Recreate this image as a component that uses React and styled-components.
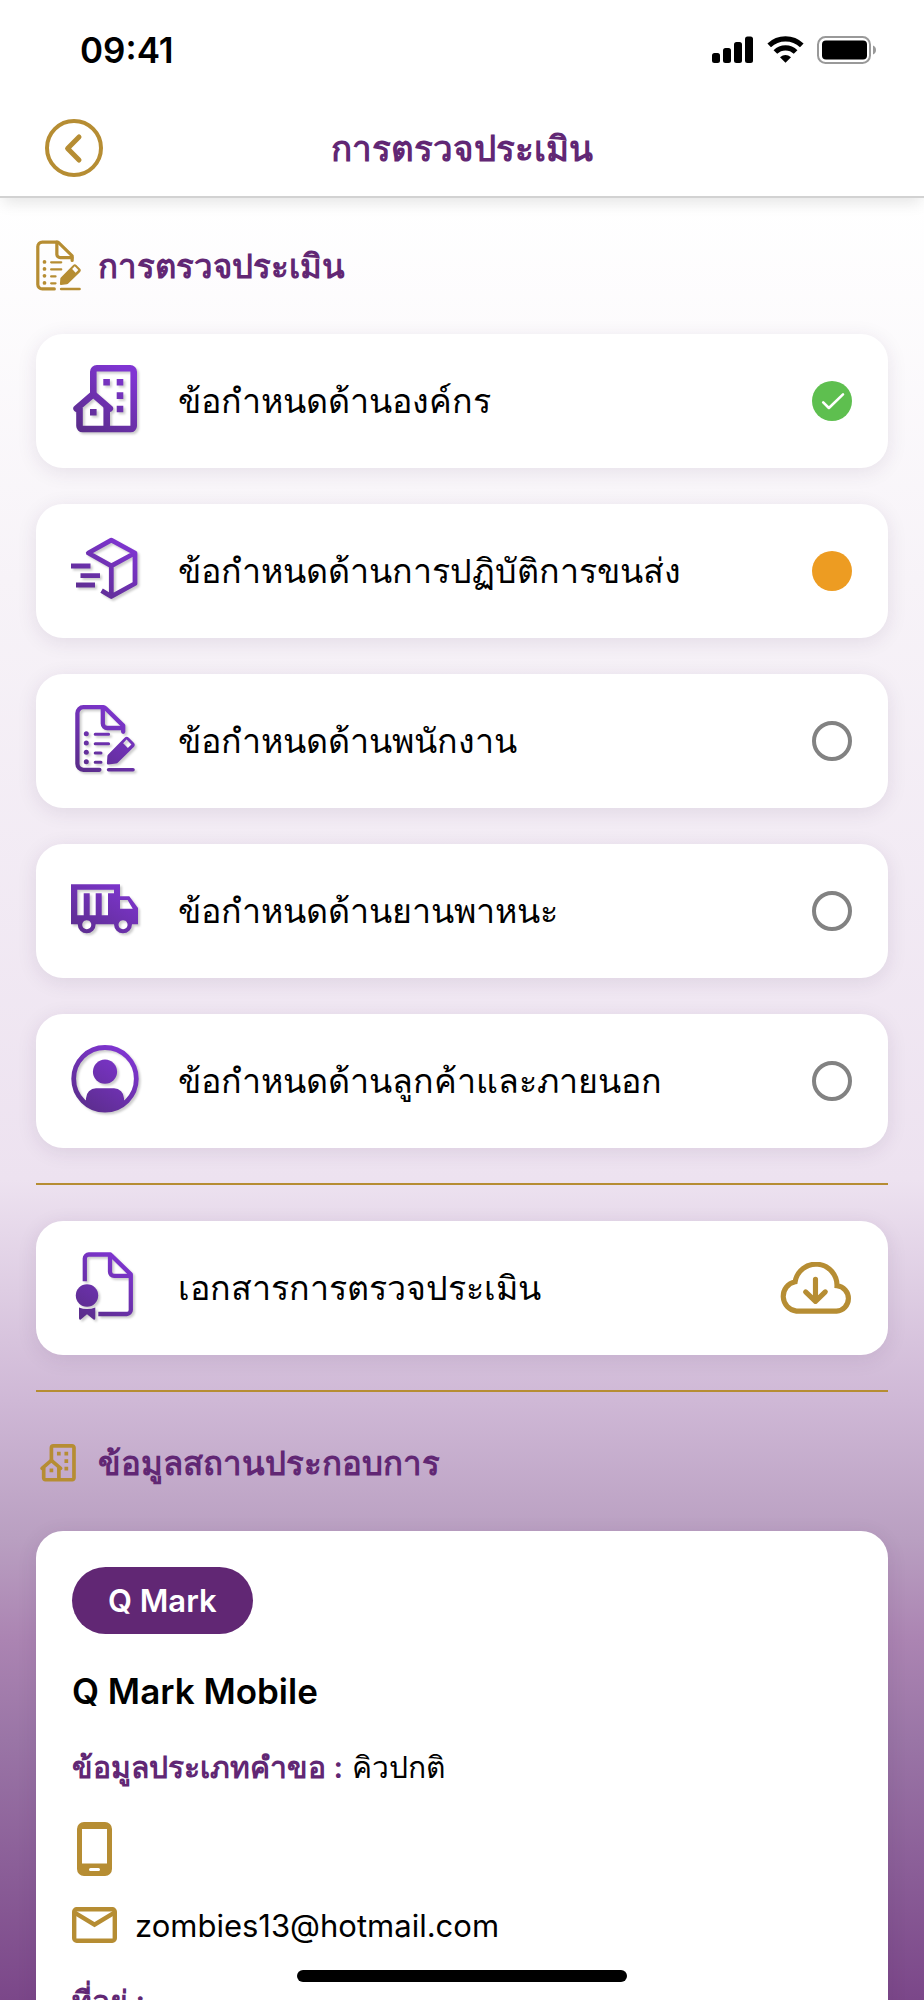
import styled, { createGlobalStyle, css } from "styled-components";

const gold = "#b68d33";
const purple = "#612774";

const requirements = [
    { icon: "building", label: "ข้อกำหนดด้านองค์กร", status: "done" },
    { icon: "delivery", label: "ข้อกำหนดด้านการปฏิบัติการขนส่ง", status: "progress" },
    { icon: "checklist", label: "ข้อกำหนดด้านพนักงาน", status: "empty" },
    { icon: "truck", label: "ข้อกำหนดด้านยานพาหนะ", status: "empty" },
    { icon: "person", label: "ข้อกำหนดด้านลูกค้าและภายนอก", status: "empty" },
];

const shapes = {
    building: (
        <>
            <g fill="none" stroke="currentColor" strokeWidth="6.6">
                <path d="M22.3 30V6.8a3.5 3.5 0 0 1 3.5-3.5h33.4a3.5 3.5 0 0 1 3.5 3.5V61a3 3 0 0 1-3 3H11.5a3 3 0 0 1-3-3V43" />
                <path d="M35.7 64V42" />
                <path d="M5.6 43.5L22.2 29.2L38.8 43.5" strokeLinecap="round" />
            </g>
            <path fill="currentColor" d="M32.3 14h6.6v6.6h-6.6zM45.7 14h6.6v6.6h-6.6zM45.7 27.3h6.6v6.6h-6.6zM45.7 40.7h6.6v6.6h-6.6zM19 44h6.6v6.6H19z" />
        </>
    ),
    delivery: (
        <g fill="none" stroke="currentColor" strokeWidth="4.8">
            <path strokeLinejoin="round" d="M40.3 5.2L17.3 18L40.3 30.8L64 18L40.3 5.2ZM64 18V48.5L40.3 61.5L30.6 55.6M40.3 30.8V61.5" />
            <path d="M0 31H19.5M9.5 40.7H29M5 50H24" />
        </g>
    ),
    checklist: (
        <>
            <g fill="none" stroke="currentColor" strokeWidth="4.3" strokeLinecap="round" strokeLinejoin="round">
                <path d="M52.2 26.8V20.6L34.5 3.2a3.5 3.5 0 0 0-2.4-1H12.4a6 6 0 0 0-6 6V58.8a6 6 0 0 0 6 6H28.4" />
                <path d="M31.8 2.4V18.6a4.4 4.4 0 0 0 4.4 4.4H52" />
                <path strokeWidth="3.6" d="M37.6 64.8H62" />
                <path strokeWidth="3" d="M24.2 29.3H37.6M24.2 38.7H37.6M24.2 48H30M24.2 57.3H30" />
            </g>
            <g fill="currentColor">
                <circle cx="15.3" cy="28.7" r="2.5" />
                <circle cx="15.3" cy="38" r="2.5" />
                <circle cx="15.3" cy="47.3" r="2.5" />
                <circle cx="15.3" cy="56.7" r="2.5" />
                <path fillRule="evenodd" d="M37.2 49.4L53.6 32.8Q55.7 30.8 57.8 32.8L62.8 37.8Q64.7 39.9 62.8 42L47 57.6Q46.3 58.4 45 58.6L37.4 59.5Q35.8 59.6 35.9 58L36.4 51Q36.5 50.1 37.2 49.4ZM55.6 34.6L52.2 38.2L56.8 43L60.4 39.4Z" />
            </g>
        </>
    ),
    truck: (
        <path
            fill="currentColor"
            fillRule="evenodd"
            d="M0 9.3H49V21.3H58.3L67 33V49.3H61A9 9 0 1 1 43 49.3H24.7A9 9 0 1 1 6.7 49.3H0ZM6.3 14.7V40.3H12.7V18.3H18.7V40.3H24.7V18.3H30.7V40.3H37V18.3H43V14.7ZM49 25V33.7H61.8L56.6 25ZM15.7 45.2a4.5 4.5 0 1 0 .1 0ZM52 45.2a4.5 4.5 0 1 0 .1 0Z"
        />
    ),
    person: (
        <>
            <circle cx="34" cy="33.8" r="31.3" fill="none" stroke="currentColor" strokeWidth="4.8" />
            <circle cx="34" cy="26.7" r="12.1" fill="currentColor" />
            <path fill="currentColor" d="M15 57V53.3a10 10 0 0 1 10-10H43a10 10 0 0 1 10 10V57Q45 66 34 66T15 57Z" />
        </>
    ),
    certificate: (
        <>
            <g fill="none" stroke="currentColor" strokeWidth="4.3" strokeLinejoin="round">
                <path d="M13.8 29.3V6.5a4 4 0 0 1 4-4H39.4L59.8 22.4V58a4 4 0 0 1-4 4H27.3" />
                <path d="M39 2.6V19.8a4 4 0 0 0 4 4H59.6" />
            </g>
            <circle cx="16" cy="43.5" r="11.2" fill="currentColor" />
            <path fill="currentColor" d="M8 55.6Q16 58.6 24.3 55.6V66.2Q24.2 68.2 22.6 67.4L16 62.2L9.8 67.4Q8.1 68.2 8 66.2Z" />
        </>
    ),
};

// the purple icons are one shape used as a mask over the gradient
const GradientIcon = ({ name }) => (
    <RowIcon viewBox="0 0 68 72" aria-hidden="true">
        <defs>
            <linearGradient id={`fill-${name}`} gradientUnits="userSpaceOnUse" x1="54" y1="4" x2="14" y2="66">
                <stop offset="0" stopColor="#8035d3" />
                <stop offset="1" stopColor="#5b2d8c" />
            </linearGradient>
            <mask id={`shape-${name}`} maskUnits="userSpaceOnUse" x="0" y="0" width="68" height="72">
                <g color="#fff">{shapes[name]}</g>
            </mask>
        </defs>
        <rect width="68" height="72" fill={`url(#fill-${name})`} mask={`url(#shape-${name})`} />
    </RowIcon>
);

const Status = ({ type }) => (
    <StatusMark viewBox="0 0 40 40" role="img" aria-label={type}>
        {type === "done" && (
            <>
                <circle cx="20" cy="20" r="20" fill="#5ebf4f" />
                <path d="M11.2 21.3L16.9 27L31 13.4" fill="none" stroke="#fff" strokeWidth="2.6" strokeLinecap="round" strokeLinejoin="round" />
            </>
        )}
        {type === "progress" && <circle cx="20" cy="20" r="20" fill="#ed9c22" />}
        {type === "empty" && <circle cx="20" cy="20" r="18" fill="none" stroke="#828282" strokeWidth="4" />}
    </StatusMark>
);

export default function App() {
    return (
        <Screen>
            <GlobalStyle />
            <Header>
                <StatusBar>
                    <Time>09:41</Time>
                    <Signals viewBox="0 0 165 28" aria-hidden="true">
                        <rect x="0" y="17" width="8" height="10" rx="2.5" />
                        <rect x="11" y="12" width="8" height="15" rx="2.5" />
                        <rect x="22" y="6" width="8" height="21" rx="2.5" />
                        <rect x="33" y="0.5" width="8" height="26.5" rx="2.5" />
                        <g fill="none" stroke="#000" strokeWidth="5.2">
                            <path d="M57.2 9.4A23.6 23.6 0 0 1 89.8 9.4" />
                            <path d="M63.4 16A14.4 14.4 0 0 1 83.6 16" />
                        </g>
                        <path d="M73.5 26.8L68 21.2Q73.5 16.6 79 21.2Z" />
                        <rect x="106" y="1" width="52" height="26" rx="7.5" fill="none" stroke="#999" strokeWidth="2" />
                        <rect x="110" y="4.5" width="45" height="19" rx="4" />
                        <path d="M161 9.5Q164 10.8 164 14T161 18.5Z" fill="#999" />
                    </Signals>
                </StatusBar>
                <NavBar>
                    <BackButton type="button" aria-label="กลับ">
                        <svg viewBox="0 0 58 58" width="58" height="58" fill="none" stroke="currentColor">
                            <circle cx="29" cy="29" r="27" strokeWidth="4" />
                            <path d="M34 18L22.6 29.4L34 41" strokeWidth="5" strokeLinecap="round" strokeLinejoin="round" />
                        </svg>
                    </BackButton>
                    <PageTitle>การตรวจประเมิน</PageTitle>
                </NavBar>
            </Header>

            <Content>
                <SectionHeading>
                    <svg viewBox="4 0 60 67" width="45" height="51" aria-hidden="true">{shapes.checklist}</svg>
                    <h2>การตรวจประเมิน</h2>
                </SectionHeading>

                <List>
                    {requirements.map((r) => (
                        <Row key={r.icon} type="button">
                            <GradientIcon name={r.icon} />
                            <RowLabel>{r.label}</RowLabel>
                            <Status type={r.status} />
                        </Row>
                    ))}
                </List>

                <Divider />

                <Row type="button">
                    <GradientIcon name="certificate" />
                    <RowLabel>เอกสารการตรวจประเมิน</RowLabel>
                    <Cloud viewBox="1 0 70 50" aria-hidden="true">
                        <path d="M17 47.5A14.5 14.5 0 0 1 15.7 18.9A20.5 20.5 0 0 1 56.4 22.8A12.4 12.4 0 0 1 56 47.5Z" />
                        <path strokeLinecap="round" strokeLinejoin="round" d="M35.5 16.5V38M25.9 28.8L35.5 38L45 28.8" />
                    </Cloud>
                </Row>

                <Divider />

                <SectionHeading>
                    <svg viewBox="3 0 64 68" width="45" height="38" aria-hidden="true">{shapes.building}</svg>
                    <h2>ข้อมูลสถานประกอบการ</h2>
                </SectionHeading>

                <InfoCard>
                    <Badge>Q Mark</Badge>
                    <CompanyName>Q Mark Mobile</CompanyName>
                    <InfoText>
                        <strong>ข้อมูลประเภทคำขอ :</strong> คิวปกติ
                    </InfoText>
                    <Contact $tall>
                        <svg viewBox="0 0 45 54" width="45" height="54" aria-hidden="true">
                            <path fill="currentColor" fillRule="evenodd" d="M12 0H33a7 7 0 0 1 7 7V47a7 7 0 0 1-7 7H12a7 7 0 0 1-7-7V7a7 7 0 0 1 7-7ZM10 7V41.5H35V7ZM18.5 46a1.3 1.3 0 0 0 0 3H26.5a1.3 1.3 0 0 0 0-3Z" />
                        </svg>
                    </Contact>
                    <Contact>
                        <svg viewBox="0 0 45 36" width="45" height="36" fill="none" stroke="currentColor" strokeWidth="4.4" aria-hidden="true">
                            <rect x="2.2" y="2.2" width="40.6" height="31.6" rx="2.5" />
                            <path d="M3 5.8L22.5 17.6L42 5.8" />
                        </svg>
                        <a href="mailto:zombies13@hotmail.com">zombies13@hotmail.com</a>
                    </Contact>
                    <InfoText>
                        <strong>ที่อยู่ :</strong>
                    </InfoText>
                </InfoCard>
            </Content>
            <HomeIndicator />
        </Screen>
    );
}

const GlobalStyle = createGlobalStyle`
*{
    box-sizing: border-box;
}
body{
    margin: 0;
    font-family: Inter, "Noto Sans", sans-serif;
    color: #000;
}
h1, h2, h3, p{
    margin: 0;
}
button{
    font: inherit;
    color: inherit;
    border: 0;
    padding: 0;
    cursor: pointer;
}
`;

const Screen = styled.div`
display: flex;
flex-direction: column;
height: 100vh;
overflow: hidden;
background: linear-gradient(180deg, #fff 10%, #f7f3f8 29%, #ede2f0 59%, #cfb8d6 70%, #b99fc1 77%, #ab84b2 82%, #9a75a6 87%, #7b4789 100%);
`;

const Header = styled.header`
position: relative;
flex: none;
background: #fff;
border-bottom: 2px solid #d2d2d2;
box-shadow: 0 8px 14px -3px rgba(0, 0, 0, 0.1);
`;

const StatusBar = styled.div`
display: flex;
align-items: center;
justify-content: space-between;
height: 100px;
padding: 0 47px 0 80px;
`;

const Time = styled.span`
font-size: 35px;
font-weight: 600;
line-height: 40px;
`;

const Signals = styled.svg`
width: 165px;
height: 28px;
`;

const NavBar = styled.div`
display: grid;
grid-template-columns: 58px 1fr 58px;
align-items: center;
height: 96px;
padding: 0 45px;
`;

const BackButton = styled.button`
display: flex;
background: none;
color: ${gold};
`;

const headingText = css`
font-weight: 600;
color: ${purple};
`;

const PageTitle = styled.h1`
${headingText}
font-size: 35px;
line-height: 48px;
text-align: center;
`;

const Content = styled.main`
flex: 1;
min-height: 0;
padding: 33px 36px 0;
overflow-y: auto;
scrollbar-width: none;
`;

const SectionHeading = styled.div`
display: flex;
align-items: center;
gap: 17px;
height: 60px;
padding-top: 9px;
margin-bottom: 43px;
color: ${gold};

h2{
    ${headingText}
    font-size: 33px;
    line-height: 48px;
}
`;

const List = styled.div`
display: flex;
flex-direction: column;
gap: 36px;
`;

const card = css`
background: #fff;
border-radius: 27px;
box-shadow: 0 4px 20px rgba(60, 30, 80, 0.1);
`;

const Row = styled.button`
${card}
display: flex;
align-items: center;
gap: 39px;
width: 100%;
height: 134px;
padding: 0 36px 0 35px;
text-align: left;
`;

const RowIcon = styled.svg`
flex: none;
width: 68px;
height: 72px;
overflow: visible;
filter: drop-shadow(2px 2px 1px rgba(0, 0, 0, 0.2));
`;

const RowLabel = styled.span`
flex: 1;
font-size: 34px;
line-height: 48px;
`;

const StatusMark = styled.svg`
flex: none;
width: 40px;
height: 40px;
`;

const Cloud = styled.svg`
flex: none;
width: 72px;
height: 52px;
fill: none;
stroke: ${gold};
stroke-width: 5px;
`;

const Divider = styled.hr`
height: 2px;
margin: 35px 0 36px;
border: 0;
background: ${gold};
`;

const InfoCard = styled.section`
${card}
display: flex;
flex-direction: column;
align-items: flex-start;
padding: 36px;
`;

const Badge = styled.span`
padding: 0 36px;
border-radius: 34px;
background: ${purple};
color: #fff;
font-size: 31px;
font-weight: 600;
line-height: 67px;
`;

const CompanyName = styled.h3`
margin-top: 33px;
font-size: 35px;
font-weight: 600;
line-height: 48px;
`;

const InfoText = styled.p`
margin: 28px 0;
font-size: 30px;
line-height: 48px;

strong{
    ${headingText}
}
`;

const Contact = styled.div`
display: flex;
align-items: center;
gap: 18px;
height: ${(p) => (p.$tall ? 60 : 48)}px;
margin-bottom: ${(p) => (p.$tall ? 22 : 0)}px;
color: ${gold};
font-size: 31px;

a{
    color: #000;
    text-decoration: none;
}
`;

const HomeIndicator = styled.div`
position: fixed;
bottom: 18px;
left: 50%;
width: 330px;
height: 12px;
margin-left: -165px;
border-radius: 6px;
background: #000;
`;
